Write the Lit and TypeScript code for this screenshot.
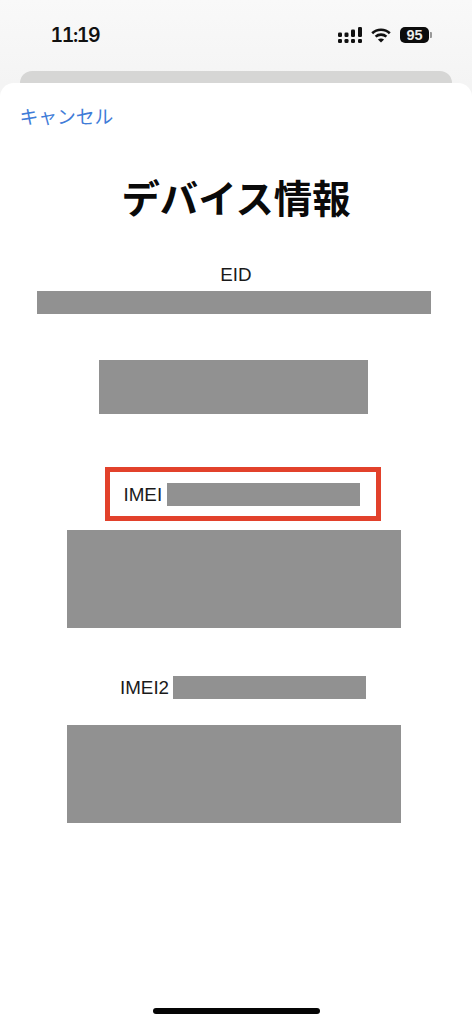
import { LitElement, html, css } from "lit";
import { customElement } from "lit/decorators.js";

const SANS = css`"Liberation Sans", "Noto Sans CJK JP", sans-serif`;

@customElement("app-root")
export class AppRoot extends LitElement {
  static styles = css`
    :host {
      display: block;
      width: 472px;
      height: 1024px;
      overflow: hidden;
      background: linear-gradient(180deg, #f9f9f9 0, #f4f4f4 84px);
      font-family: ${SANS};
      color: #111;
    }
    .status {
      height: 71px;
      box-sizing: border-box;
      display: flex;
      align-items: flex-start;
      padding: 24px 43px 0 50.5px;
    }
    .time {
      font-family: Inter, "Liberation Sans", sans-serif;
      font-size: 19.5px;
      line-height: 22px;
      font-weight: 600;
      font-feature-settings: "tnum";
      letter-spacing: -1.4px;
      color: #111;
    }
    .icons {
      margin-left: auto;
      display: flex;
      align-items: center;
      gap: 9px;
      height: 16px;
      margin-top: 3px;
    }
    .icons svg { display: block; }
    .battery {
      width: 29px;
      height: 16px;
      border-radius: 5px;
      background: #0c0c0c;
      color: #ececec;
      font-size: 14.5px;
      line-height: 16px;
      font-weight: 700;
      text-align: center;
      position: relative;
    }
    .battery::after {
      content: "";
      position: absolute;
      left: 30px;
      top: 5px;
      width: 1.5px;
      height: 6px;
      background: #999;
      border-radius: 0 1px 1px 0;
    }
    .back {
      height: 12px;
      margin: 0 20px;
      background: #d6d6d5;
      border-radius: 12px 12px 0 0;
    }
    .sheet {
      height: 941px;
      box-sizing: border-box;
      background: #fff;
      border-radius: 14px 14px 0 0;
      padding-top: 22px;
      position: relative;
    }
    .cancel {
      margin-left: 19.5px;
      font-size: 18.8px;
      line-height: 26px;
      color: #3f7cd8;
    }
    h1 {
      margin: 44px 0 0;
      width: 472px;
      text-align: center;
      font-size: 38.4px;
      line-height: 50px;
      font-weight: 700;
      color: #0a0a0a;
    }
    .label {
      font-size: 18.8px;
      line-height: 23px;
      color: #1a1a1a;
      white-space: nowrap;
    }
    .eid {
      margin-top: 39px;
      width: 472px;
      text-align: center;
      line-height: 22px;
    }
    .mask { background: #919191; flex: none; }
    .eid-mask { margin: 5px 0 0 37px; width: 394px; height: 23px; }
    .plain-mask { margin: 46px 0 0 99px; width: 269px; height: 54px; }
    .framed {
      margin: 53px 0 0 105px;
      width: 276px;
      height: 54px;
      box-sizing: border-box;
      border: 5.5px solid #e2412b;
      display: flex;
      align-items: center;
      padding-left: 13.5px;
    }
    .framed .label { width: 43px; }
    .line-mask { width: 193px; height: 23px; }
    .big-mask { width: 334px; height: 98px; margin-left: 67px; }
    .after-frame { margin-top: 9px; }
    .imei2 {
      margin: 48px 0 0 120px;
      display: flex;
      align-items: center;
    }
    .imei2 .label { width: 53px; }
    .after-imei2 { margin-top: 26px; }
    .home {
      position: absolute;
      left: 153px;
      bottom: 10px;
      width: 167px;
      height: 6px;
      border-radius: 3px;
      background: #050505;
    }
  `;

  render() {
    return html`
      <div class="status">
        <span class="time">11:19</span>
        <div class="icons">
          <svg width="24" height="16" viewBox="0 0 24 16" fill="#111">
            <rect x="0" y="12" width="4" height="4" rx="1.3"></rect>
            <rect x="6.5" y="12" width="4" height="4" rx="1.3"></rect>
            <rect x="13" y="12" width="4" height="4" rx="1.3"></rect>
            <rect x="20" y="12" width="4" height="4" rx="1.3"></rect>
            <rect x="0" y="5.5" width="4" height="4.5" rx="1.3"></rect>
            <rect x="6.5" y="5.5" width="4" height="4.5" rx="1.3"></rect>
            <rect x="13" y="2.5" width="4" height="7.5" rx="1.3"></rect>
            <rect x="20" y="0" width="4" height="10" rx="1.3"></rect>
          </svg>
          <svg width="20" height="15" viewBox="0 0 20 15" fill="none" stroke="#111" stroke-width="2.6">
            <path d="M1.2 5.2 C6 0.6 14 0.6 18.8 5.2"></path>
            <path d="M4.6 8.6 C7.6 5.9 12.4 5.9 15.4 8.6"></path>
            <path d="M10 14.6 L6.9 11.6 C8.7 10 11.3 10 13.1 11.6 Z" fill="#111" stroke="none"></path>
          </svg>
          <div class="battery">95</div>
        </div>
      </div>
      <div class="back"></div>
      <div class="sheet">
        <div class="cancel">キャンセル</div>
        <h1>デバイス情報</h1>
        <div class="label eid">EID</div>
        <div class="mask eid-mask"></div>
        <div class="mask plain-mask"></div>
        <div class="framed">
          <span class="label">IMEI</span>
          <div class="mask line-mask"></div>
        </div>
        <div class="mask big-mask after-frame"></div>
        <div class="imei2">
          <span class="label">IMEI2</span>
          <div class="mask line-mask"></div>
        </div>
        <div class="mask big-mask after-imei2"></div>
        <div class="home"></div>
      </div>
    `;
  }
}
